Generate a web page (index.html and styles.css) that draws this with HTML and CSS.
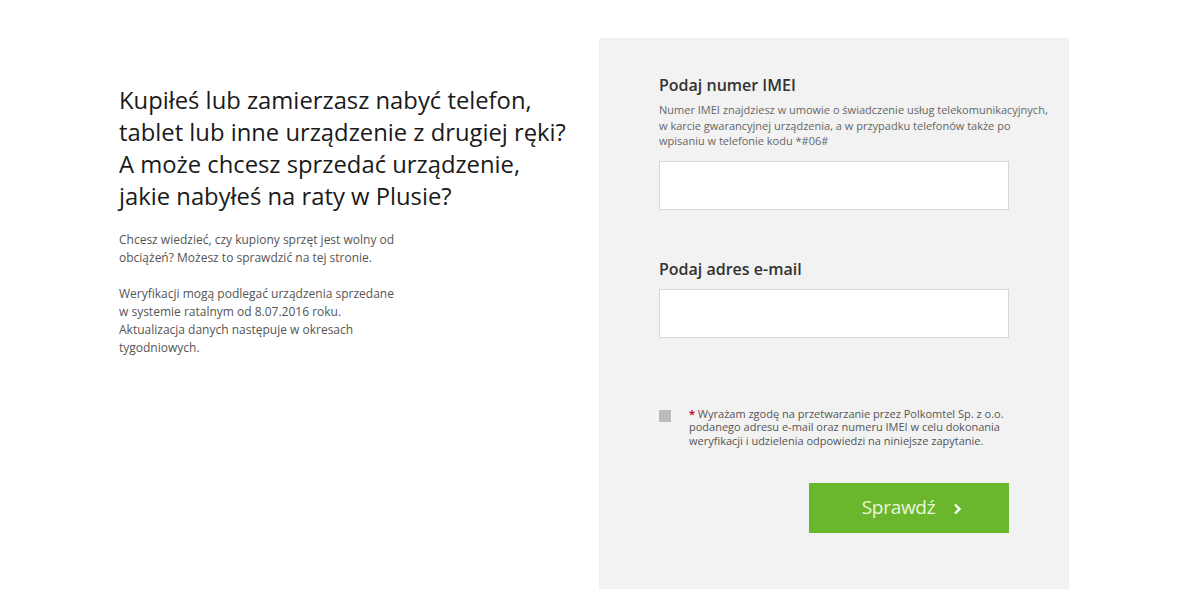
FILE: index.html
```html
<!DOCTYPE html>
<html lang="pl">
<head>
<meta charset="utf-8">
<link rel="stylesheet" href="styles.css">
</head>
<body>
<div class="page">
  <section class="intro">
    <h1 class="headline">Kupiłeś lub zamierzasz nabyć telefon,<br>tablet lub inne urządzenie z drugiej ręki?<br>A może chcesz sprzedać urządzenie,<br>jakie nabyłeś na raty w Plusie?</h1>
    <p class="copy">Chcesz wiedzieć, czy kupiony sprzęt jest wolny od<br>obciążeń? Możesz to sprawdzić na tej stronie.</p>
    <p class="copy">Weryfikacji mogą podlegać urządzenia sprzedane<br>w systemie ratalnym od 8.07.2016 roku.<br>Aktualizacja danych następuje w okresach<br>tygodniowych.</p>
  </section>
  <section class="panel">
    <form class="form">
      <div class="field">
        <label class="label" for="imei">Podaj numer IMEI</label>
        <p class="hint">Numer IMEI znajdziesz w umowie o świadczenie usług telekomunikacyjnych,<br>w karcie gwarancyjnej urządzenia, a w przypadku telefonów także po<br>wpisaniu w telefonie kodu *#06#</p>
        <input class="input" id="imei" type="text">
      </div>
      <div class="field field-email">
        <label class="label" for="email">Podaj adres e-mail</label>
        <input class="input input-email" id="email" type="text">
      </div>
      <div class="consent">
        <span class="box"></span>
        <p class="consent-text"><span class="req">*</span> Wyrażam zgodę na przetwarzanie przez Polkomtel Sp. z o.o.<br>podanego adresu e-mail oraz numeru IMEI w celu dokonania<br>weryfikacji i udzielenia odpowiedzi na niniejsze zapytanie.</p>
      </div>
      <div class="actions">
        <button class="btn" type="button">Sprawdź <span class="chev"><svg width="9" height="12" viewBox="0 0 9 12"><path d="M2 1.5 L6.5 6 L2 10.5" fill="none" stroke="#fff" stroke-width="2.4"/></svg></span></button>
      </div>
    </form>
  </section>
</div>
</body>
</html>
```

FILE: styles.css
```css
* { box-sizing: border-box; }
html, body { margin: 0; padding: 0; background: #fff; }
body { font-family: "Open Sans", "Noto Sans", sans-serif; color: #222; }
.page {
  display: flex;
  padding-top: 38px;
  height: 599px;
  overflow: hidden;
}
.intro {
  width: 599px;
  padding-left: 119px;
  padding-top: 46px;
}
.headline {
  margin: 0 0 19px;
  font-weight: 400;
  font-size: 23.8px;
  line-height: 32px;
  color: #1a1a1a;
  letter-spacing: 0;
}
.copy {
  margin: 0 0 18px;
  font-size: 12px;
  line-height: 18px;
  color: #555;
}
.panel {
  width: 470px;
  height: 551px;
  background: #f2f2f2;
  padding: 36px 60px 0;
}
.form { display: flex; flex-direction: column; }
.label {
  display: block;
  font-size: 16px;
  font-weight: 600;
  color: #333;
  line-height: 22px;
}
.hint {
  margin: 6px 0 12px;
  font-size: 11px;
  line-height: 15.5px;
  color: #666;
  white-space: nowrap;
}
.input {
  display: block;
  width: 350px;
  height: 49px;
  border: 1px solid #d7d7d7;
  background: #fff;
  margin: 0;
}
.field-email { margin-top: 48px; }
.input-email { margin-top: 9px; }
.consent {
  display: flex;
  gap: 18px;
  margin-top: 69px;
}
.box {
  flex: none;
  width: 12px;
  height: 12px;
  margin-top: 3px;
  background: #bbb;
}
.consent-text {
  margin: 0;
  font-size: 11px;
  line-height: 13.5px;
  color: #555;
  white-space: nowrap;
}
.req { color: #c8102e; font-weight: 700; }
.actions { display: flex; justify-content: flex-end; width: 350px; margin-top: 36px; }
.btn {
  width: 200px;
  height: 50px;
  border: 0;
  background: #6ab72e;
  color: #eaf6dc;
  font-family: "Open Sans", sans-serif;
  font-size: 19px;
  letter-spacing: -0.3px;
  display: flex;
  align-items: center;
  justify-content: center;
  gap: 18px;
  padding: 0 0 2px 6px;
}
.chev { display: flex; align-items: center; margin-top: 3px; }
```
